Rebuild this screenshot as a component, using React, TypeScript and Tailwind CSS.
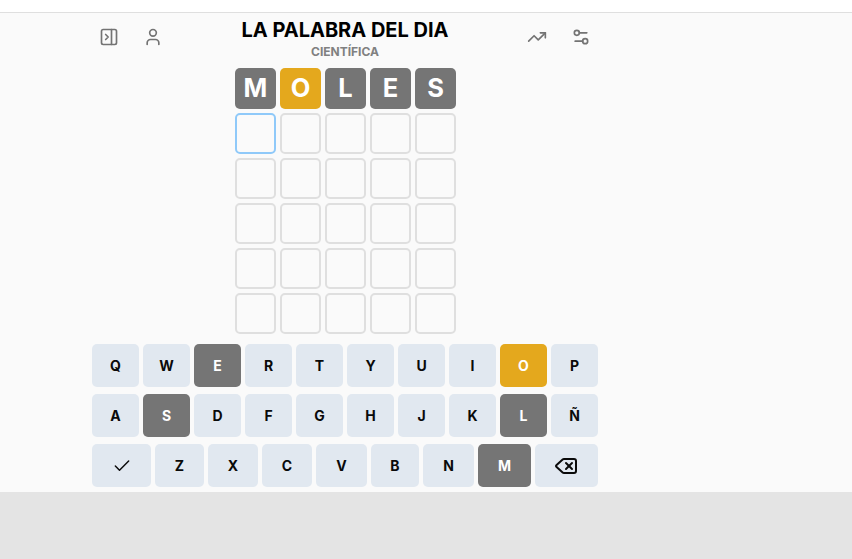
import { Check, Delete, PanelRightClose, Settings2, TrendingUp, User } from "lucide-react";

type Status = "absent" | "present" | "unused";

const guess = "MOLES";
const statuses: Record<string, Status> = {
  M: "absent",
  O: "present",
  L: "absent",
  E: "absent",
  S: "absent",
};

const fills: Record<Status, string> = {
  absent: "bg-[#757575] text-white",
  present: "bg-[#e4a81d] text-white",
  unused: "bg-[#e1e8f0] text-[#0a0a0a]",
};

const lastRow = [
  { letter: "Z", width: "w-[49px]" },
  { letter: "X", width: "w-[50px]" },
  { letter: "C", width: "w-[50px]" },
  { letter: "V", width: "w-[51px]" },
  { letter: "B", width: "w-[48px]" },
  { letter: "N", width: "w-[51px]" },
  { letter: "M", width: "w-[53px]" },
];

function Key({ letter, width }: { letter: string; width: string }) {
  return (
    <button
      className={`flex h-[43px] items-center justify-center rounded-[5px] text-sm leading-5 font-bold ${width} ${fills[statuses[letter] ?? "unused"]}`}
    >
      {letter}
    </button>
  );
}

function Header() {
  return (
    <header className="flex h-[55px] w-[506px] items-start justify-between px-[7px] text-[#737373]">
      <div className="flex gap-6 pt-[14px]">
        <PanelRightClose size={20} strokeWidth={2} />
        <User size={20} strokeWidth={2} />
      </div>
      <div className="flex flex-col items-center pt-[3px]">
        <h1 className="text-xl leading-7 font-bold text-black">LA PALABRA DEL DIA</h1>
        <p className="text-xs leading-4 font-bold text-[#808080]">CIENTÍFICA</p>
      </div>
      <div className="flex gap-6 pt-[14px]">
        <TrendingUp size={20} strokeWidth={2} />
        <Settings2 size={20} strokeWidth={2} />
      </div>
    </header>
  );
}

function Board() {
  return (
    <div className="grid grid-cols-[repeat(5,41px)] gap-1">
      {Array.from({ length: 30 }, (_, i) =>
        i < 5 ? (
          <div
            key={i}
            className={`flex h-[41px] items-center justify-center rounded-[5px] pb-px pl-px text-[25.5px] leading-none font-bold ${fills[statuses[guess[i]]]}`}
          >
            {guess[i]}
          </div>
        ) : (
          <div
            key={i}
            className={`h-[41px] rounded-[5px] border-2 ${i === 5 ? "border-[#8fc9f9]" : "border-[#dfdfdf]"}`}
          />
        ),
      )}
    </div>
  );
}

function Keyboard() {
  return (
    <div className="mt-[10px] flex flex-col gap-[7px]">
      {["QWERTYUIOP", "ASDFGHJKLÑ"].map((row) => (
        <div key={row} className="flex gap-1">
          {row.split("").map((letter) => (
            <Key key={letter} letter={letter} width="w-[47px]" />
          ))}
        </div>
      ))}
      <div className="flex gap-1">
        <button className={`flex h-[43px] w-[59px] items-center justify-center rounded-[5px] ${fills.unused}`}>
          <Check size={20} strokeWidth={1.75} />
        </button>
        {lastRow.map((key) => (
          <Key key={key.letter} {...key} />
        ))}
        <button className={`flex h-[43px] w-[63px] items-center justify-center rounded-[5px] pr-[2px] ${fills.unused}`}>
          <Delete size={24} strokeWidth={2} />
        </button>
      </div>
    </div>
  );
}

export default function App() {
  return (
    <div className="h-[559px] w-[852px] overflow-hidden bg-[#e4e4e4] font-['Inter',sans-serif]">
      <div className="h-3 bg-white" />
      <main className="h-[480px] border-t border-[#dfdfdf] bg-[#fafafa]">
        <div className="flex w-[690px] flex-col items-center">
          <Header />
          <Board />
          <Keyboard />
        </div>
      </main>
    </div>
  );
}
